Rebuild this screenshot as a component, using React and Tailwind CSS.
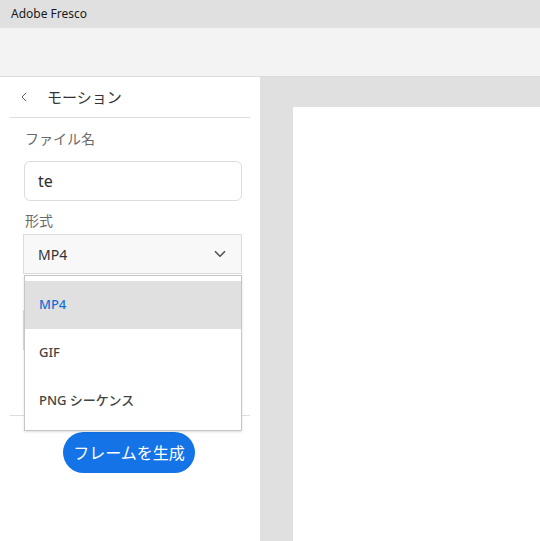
import { ChevronLeft, ChevronDown } from "lucide-react";

const font = { fontFamily: '"Noto Sans", "Noto Sans CJK JP", sans-serif' };

export default function App() {
  return (
    <div className="w-[540px] h-[541px] flex flex-col overflow-hidden bg-white" style={font}>
      <div className="h-[28px] bg-[#e0e0e0] flex items-center px-[11px] text-[12px] text-[#1a1a1a] shrink-0">
        Adobe Fresco
      </div>
      <div className="h-[49px] bg-[#f3f3f3] border-b border-[#dcdcdc] shrink-0" />

      <div className="flex flex-1 min-h-0">
        <div className="relative w-[260px] shrink-0 bg-white">
          <div className="h-[40px] flex items-center pl-[16px] text-[#555]">
            <ChevronLeft size={16} strokeWidth={1.4} />
            <span className="ml-[15px] text-[15px] text-[#333]">モーション</span>
          </div>
          <div className="mx-[10px] h-px bg-[#dedede]" />

          <div className="pl-[23px] pr-[18px]">
            <div className="mt-[10px] pl-[2px] text-[14px] leading-[22px] text-[#6b6b6b]">ファイル名</div>
            <div className="mt-[11px] ml-[1px] h-[40px] rounded-[6px] border border-[#dcdcdc] flex items-center px-[13px] text-[16px] text-[#2c2c2c]">
              te
            </div>
            <div className="mt-[9px] pl-[2px] text-[14px] leading-[22px] text-[#6b6b6b]">形式</div>
            <div className="mt-[2px] h-[40px] border border-[#dcdcdc] bg-[#f8f8f8] flex items-center justify-between pl-[14px] pr-[12px] text-[14px] text-[#333]">
              <span>MP4</span>
              <ChevronDown size={18} strokeWidth={2.2} className="text-[#555]" />
            </div>
            <div className="mt-[36px] h-[40px] border border-[#dcdcdc] bg-[#f8f8f8]" />
          </div>

          <div className="mt-[65px] mx-[10px] h-px bg-[#dedede]" />
          <div className="flex justify-center pt-[16px] pl-[-2px] pr-[2px]">
            <button className="h-[41px] w-[132px] rounded-full bg-[#1473e6] text-white text-[16px]">
              フレームを生成
            </button>
          </div>

          <div className="absolute left-[24px] top-[198px] w-[218px] h-[156px] bg-white border border-[#c6c6c6] shadow-sm pt-[5px]">
            <div className="h-[48px] bg-[#e0e0e0] flex items-center pl-[14px] text-[13px] font-medium text-[#1a6fd6]">MP4</div>
            <div className="h-[48px] flex items-center pl-[14px] text-[13px] font-medium text-[#444]">GIF</div>
            <div className="h-[48px] flex items-center pl-[14px] text-[13px] font-medium text-[#444]">PNG シーケンス</div>
          </div>
        </div>

        <div className="flex-1 bg-[#e0e0e0] pl-[33px] pt-[30px] flex">
          <div className="flex-1 bg-white" />
        </div>
      </div>
    </div>
  );
}
